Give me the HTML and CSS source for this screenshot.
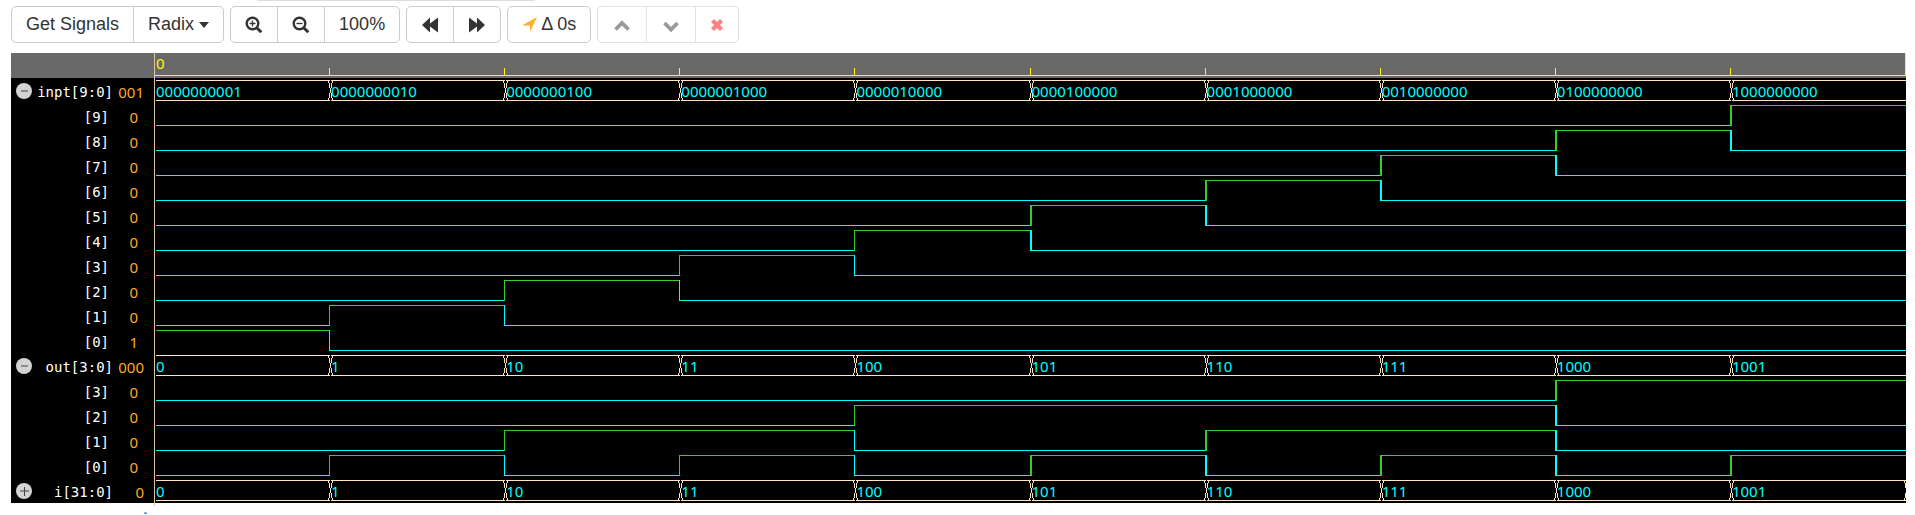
FILE: index.html
```html
<!DOCTYPE html>
<html lang="en">
<head>
<meta charset="utf-8">
<title>Waveform viewer</title>
<link rel="stylesheet" href="styles.css">
</head>
<body>
<div class="top-rule"></div>
<div class="toolbar">
  <div class="group">
    <button type="button" class="btn">Get Signals</button>
    <button type="button" class="btn">Radix <svg class="caret" viewBox="0 0 10 6" aria-hidden="true"><path d="M0 0h10L5 6z"/></svg></button>
  </div>
  <div class="group">
    <button type="button" class="btn icon-btn" aria-label="Zoom in"><svg class="icon" viewBox="0 0 18 18" aria-hidden="true"><circle cx="7.5" cy="7.5" r="5.8" fill="none" stroke="currentColor" stroke-width="2.4"/><path d="M12 12l4.3 4.3" stroke="currentColor" stroke-width="3"/><path d="M4.500 7.500h6M7.500 4.500v6" stroke="currentColor" stroke-width="1.300"/></svg></button>
    <button type="button" class="btn icon-btn" aria-label="Zoom out"><svg class="icon" viewBox="0 0 18 18" aria-hidden="true"><circle cx="7.5" cy="7.5" r="5.8" fill="none" stroke="currentColor" stroke-width="2.4"/><path d="M12 12l4.3 4.3" stroke="currentColor" stroke-width="3"/><path d="M4.500 7.500h6" stroke="currentColor" stroke-width="1.300"/></svg></button>
    <button type="button" class="btn">100%</button>
  </div>
  <div class="group">
    <button type="button" class="btn icon-btn" aria-label="Previous edge"><svg class="icon" viewBox="0 0 18 18" aria-hidden="true"><path d="M1 9l8-7.500v6L17 1.500v15l-8-6v6z"/></svg></button>
    <button type="button" class="btn icon-btn" aria-label="Next edge"><svg class="icon" viewBox="0 0 18 18" aria-hidden="true"><path d="M17 9L9 1.500v6L1 1.500v15l8-6v6z"/></svg></button>
  </div>
  <div class="group">
    <button type="button" class="btn delta"><svg class="arrow" viewBox="0 0 15 15" aria-hidden="true"><path d="M15 0L8 15V8.500H0z"/></svg>Δ 0s</button>
  </div>
  <div class="group disabled">
    <button type="button" class="btn icon-btn" disabled aria-label="Move up"><svg class="icon" viewBox="0 0 18 18" aria-hidden="true"><path d="M2.500 13.500L9 7l6.500 6.500" fill="none" stroke="currentColor" stroke-width="3.800"/></svg></button>
    <button type="button" class="btn icon-btn" disabled aria-label="Move down"><svg class="icon" viewBox="0 0 18 18" aria-hidden="true"><path d="M2.500 7L9 13.500 15.500 7" fill="none" stroke="currentColor" stroke-width="3.800"/></svg></button>
    <button type="button" class="btn remove" disabled aria-label="Remove"><svg class="cross" viewBox="0 0 14 14" aria-hidden="true"><path d="M2.500 2.500l9 9M11.500 2.500l-9 9" stroke="currentColor" stroke-width="4.200"/></svg></button>
  </div>
</div>
<main class="viewer" id="viewer"></main>
<div class="handle"></div>
<script src="waves.js"></script>
</body>
</html>
```
FILE: styles.css
```css
* { box-sizing: border-box; }
body {
  margin: 0;
  background: #fff;
  color: #333;
  font-family: "Liberation Sans", Arial, sans-serif;
  font-size: 18px;
}
.top-rule {
  width: 278px;
  height: 1px;
  margin-left: 257px;
  background: #ddd;
}
.toolbar {
  display: flex;
  gap: 6px;
  padding: 5px 11px 10px;
}
.group { display: flex; }
.btn {
  display: flex;
  align-items: center;
  justify-content: center;
  height: 37px;
  margin: 0 0 0 -1px;
  padding: 0 14px;
  border: 1px solid #ccc;
  background: #fff;
  color: #333;
  font: inherit;
  white-space: pre;
}
.btn:first-child { margin-left: 0; border-radius: 5px 0 0 5px; }
.btn:last-child { border-radius: 0 5px 5px 0; }
.btn:only-child { border-radius: 5px; }
.icon-btn { width: 48px; padding: 0; }
.icon { width: 18px; height: 18px; fill: currentColor; }
.caret { width: 10px; height: 6px; fill: #333; }
.arrow { width: 15px; height: 15px; margin-right: 4px; fill: #ffb02e; }
.cross { width: 14px; height: 14px; }
.disabled .btn { border-color: #e2e2e2; color: #999; }
.disabled .icon-btn { width: 50px; }
.disabled .remove { color: #ff8080; }

.viewer {
  margin: 0 9px 0 11px;
  background: #000;
}
.row {
  display: grid;
  grid-template-columns: 143px 1fr;
  height: 25px;
}
.ruler { background: #696969; }
.label {
  display: grid;
  grid-template-columns: 16px 1fr 31px;
  align-items: start;
  padding: 0 10px 0 5px;
  color: #fff;
  font-family: "DejaVu Sans Mono", "Liberation Mono", monospace;
  font-size: 14px;
  line-height: 28px;
  text-align: right;
}
.toggle {
  display: flex;
  width: 16px;
  height: 16px;
  margin-top: 5px;
  padding: 0;
  border: 0;
  background: none;
}
.toggle svg { width: 16px; height: 16px; }
.name { grid-column: 2; }
.value {
  color: #ffa927;
  font-family: "Noto Sans", "Open Sans", sans-serif;
  font-size: 15px;
}
.label.bit .name { padding-right: 4px; }
.label.bit .value { padding-right: 6px; }

.lane {
  display: grid;
  grid-template-columns: repeat(10, minmax(0, 1fr));
  align-items: start;
  padding-right: 1px;
  box-shadow: inset 1px 0 #d9c7a0;
  font-family: "Noto Sans", "Open Sans", sans-serif;
  font-size: 15px;
}
.cell { height: 21px; margin-top: 2px; }
.cell:first-child { margin-left: 2px; }
.cell:last-child { margin-right: -1px; }
.high { border-top: 1px solid #32cd32; }
.low { border-bottom: 1px solid #0ff; }
.edge::before {
  content: "";
  display: block;
  width: 1px;
  height: 20px;
  background: #32cd32;
}
.low.edge::before { background: #0ff; }
.wide.edge::before, .wide.tick::before { width: 2px; }
.bus {
  display: flex;
  border: solid #ffe4c4;
  border-width: 1px 0;
  color: #0ff;
  line-height: 21px;
}
.cross-mark {
  flex: none;
  width: 5px;
  height: 21px;
  margin: -1px -2px 0 -1px;
  shape-rendering: crispEdges;
}
.end-mark { margin: -1px 0 0 auto; }
.tick {
  display: flex;
  align-items: flex-end;
  height: 23px;
  margin: 0;
  border-bottom: 1px solid #ff0;
  color: #ff0;
  line-height: 20px;
}
.cell.tick { margin-top: 0; }
.cell.tick:first-child { align-items: flex-start; margin-left: 1px; padding-left: 1px; }
.tick:not(:first-child)::before {
  content: "";
  width: 1px;
  height: 7px;
  background: #ff0;
}
.cell.tick:last-child { border-right: 1px solid #ff0; }
.handle {
  width: 3px;
  height: 2px;
  margin: 9px 0 0 144px;
  border-radius: 2px 2px 0 0;
  background: #5b8fc4;
}
```
FILE: waves.js
```
const STEPS = 10;
const viewer = document.getElementById("viewer");
const steps = [...Array(STEPS).keys()];

const toggle = (name, sign) => `<button type="button" class="toggle" aria-label="Toggle ${name}">
  <svg viewBox="0 0 16 16"><circle cx="8" cy="8" r="8" fill="#d3d3d3"/>
  <path d="${sign === "+" ? "M4 8h9M8.500 4v9" : "M5 8h7"}" stroke="#444" fill="none"/></svg></button>`;

const crossMark = `<svg class="cross-mark" viewBox="0 0 5 21">
  <path d="M2 0h1v21h-1z" fill="#000"/>
  <path d="M0 0h1v3h-1zM1 3h1v5h-1zM2 8h1v5h-1zM1 13h1v5h-1zM0 18h1v3h-1zM4 0h1v3h-1zM3 3h1v5h-1zM3 13h1v5h-1zM4 18h1v3h-1z" fill="#ffe4c4"/></svg>`;
const endMark = `<svg class="cross-mark end-mark" viewBox="0 0 5 21">
  <path d="M3 0h1v3h-1zM4 3h1v5h-1zM3 18h1v3h-1zM4 13h1v5h-1z" fill="#ffe4c4"/></svg>`;

const wide = (k) => (k >= 5 ? " wide" : "");

function addRow(label, cells, extra = "") {
  viewer.insertAdjacentHTML("beforeend",
    `<div class="row${extra}">${label}<div class="lane">${cells}</div></div>`);
}

function addBus(name, value, sign, words, closed) {
  const cells = words.map((w, k) =>
    `<div class="cell bus">${k ? crossMark : ""}<span>${w}</span>${closed && k === STEPS - 1 ? endMark : ""}</div>`).join("");
  addRow(`<div class="label">${toggle(name, sign)}<span class="name">${name}</span><span class="value">${value}</span></div>`, cells);
}

function addBit(index, values) {
  const cells = steps.map((k) => {
    const level = (values[k] >> index) & 1;
    const changed = k && level !== ((values[k - 1] >> index) & 1);
    return `<div class="cell ${level ? "high" : "low"}${changed ? " edge" : ""}${wide(k)}"></div>`;
  }).join("");
  addRow(`<div class="label bit"><span class="name">[${index}]</span><span class="value">${(values[0] >> index) & 1}</span></div>`, cells);
}

const oneHot = steps.map((k) => 1 << k);
const binary = steps.map((k) => k.toString(2));

addRow(`<div class="label"></div>`,
  steps.map((k) => `<div class="cell tick${wide(k)}">${k ? "" : "0"}</div>`).join(""), " ruler");
addBus("inpt[9:0]", "001", "-", oneHot.map((v) => v.toString(2).padStart(10, "0")), false);
for (let i = 9; i >= 0; i--) addBit(i, oneHot);
addBus("out[3:0]", "000", "-", binary, false);
for (let i = 3; i >= 0; i--) addBit(i, steps);
addBus("i[31:0]", "0", "+", binary, true);
```
